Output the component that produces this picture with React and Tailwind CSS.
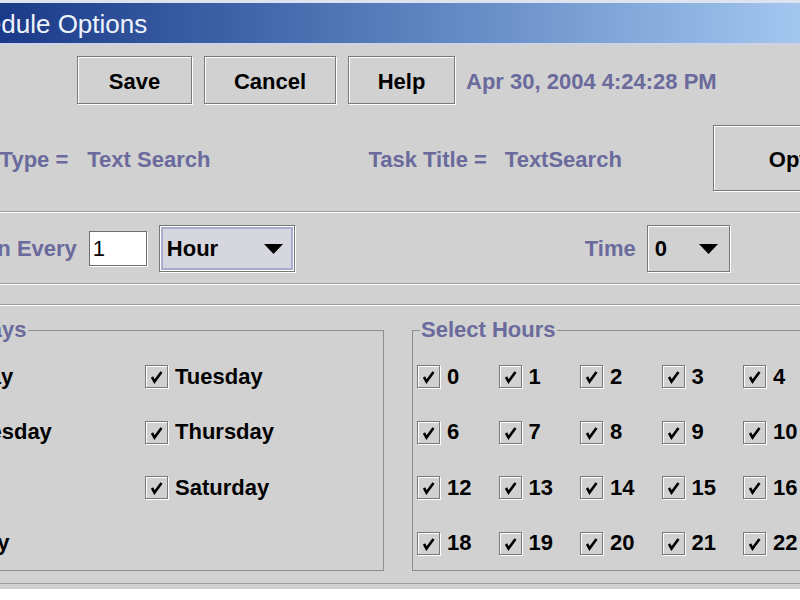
import React from 'react';

const LABEL = "text-[22px] font-bold leading-none text-[#6a6a9c] whitespace-nowrap";
const BLACK = "text-[22px] font-bold leading-none text-black whitespace-nowrap";

function Btn({children, className}) {
  return (
    <div className={"shrink-0 flex items-center justify-center pt-[4px] border border-[#7a7a7a] shadow-[inset_1px_1px_0_#fff,1px_1px_0_#fff] " + BLACK + " " + className}>
      {children}
    </div>
  );
}

function Arrow() {
  return (
    <svg width="19" height="10" viewBox="0 0 19 10" className="shrink-0">
      <polygon points="0,0 19,0 9.5,10" fill="#000" />
    </svg>
  );
}

function Check({label}) {
  return (
    <div className="flex items-center h-full">
      <span className="w-[23px] h-[23px] shrink-0 border border-[#7a7a7a] shadow-[inset_1px_1px_0_#fff,1px_1px_0_#fff] flex items-center justify-center">
        <svg width="15" height="15" viewBox="0 0 15 15">
          <path d="M3 8 L5.5 12.5 L12.5 3" stroke="#000" strokeWidth="2.6" fill="none" />
        </svg>
      </span>
      <span className={"ml-[7px] " + BLACK}>{label}</span>
    </div>
  );
}

export default function App() {
  const days = ["Monday", "Tuesday", "Wednesday", "Thursday", "Friday", "Saturday", "Sunday"];
  const hours = [];
  for (let i = 0; i < 24; i++) hours.push(i);

  return (
    <div className="w-[800px] h-[600px] overflow-hidden bg-white font-['Liberation_Sans',Arial,sans-serif]">
      <div className="h-[589px] bg-[#d1d1d1] flex flex-col">
        {/* title bar */}
        <div className="h-[45px] shrink-0 border-t-[3px] border-b-2 border-t-[#dde3ef] border-b-[#cdd3e4] bg-linear-to-r from-[#1b3a89] to-[#a3c7ef] flex items-center">
          <span className="-ml-[58px] pt-[2px] text-[26px] leading-none text-[#eef3fb] whitespace-nowrap">Schedule Options</span>
        </div>

        {/* buttons */}
        <div className="mt-[11px] h-[48px] flex items-center">
          <Btn className="ml-[77px] w-[115px] h-[48px]">Save</Btn>
          <Btn className="ml-[12px] w-[132px] h-[48px]">Cancel</Btn>
          <Btn className="ml-[12px] w-[107px] h-[48px]">Help</Btn>
          <span className={"ml-[11px] pt-[4px] " + LABEL}>Apr 30, 2004 4:24:28 PM</span>
        </div>

        {/* task info */}
        <div className="mt-[21px] h-[66px] flex items-center">
          <span className={"-ml-[55px] pt-[4px] " + LABEL}>Task Type =</span>
          <span className={"ml-[19px] pt-[4px] " + LABEL}>Text Search</span>
          <span className={"ml-[158px] pt-[4px] " + LABEL}>Task Title =</span>
          <span className={"ml-[18px] pt-[4px] " + LABEL}>TextSearch</span>
          <Btn className="ml-[91px] w-[195px] h-[66px]">Options</Btn>
        </div>

        <div className="mt-[20px] h-[2px] shrink-0 border-t border-b border-t-[#9c9c9c] border-b-white" />

        {/* run every */}
        <div className="mt-[12px] h-[47px] flex items-center">
          <span className={"-ml-[32px] " + LABEL}>Run Every</span>
          <div className="ml-[12px] w-[58px] h-[35px] shrink-0 bg-white border border-[#6e6e6e] shadow-[1px_1px_0_#fff] flex items-center pl-[3px]">
            <span className="text-[22px] leading-none text-black">1</span>
          </div>
          <div className="ml-[12px] w-[136px] h-[47px] shrink-0 border border-[#777] shadow-[1px_1px_0_#fff] p-px">
            <div className="w-full h-full border-2 border-[#a9abcf] shadow-[0_0_0_1px_#fff] bg-[#d6d6de] flex items-center pl-[4px] pr-[8px]">
              <span className={BLACK}>Hour</span>
              <span className="ml-auto"><Arrow /></span>
            </div>
          </div>
          <span className={"ml-[290px] " + LABEL}>Time</span>
          <div className="ml-[11px] w-[83px] h-[47px] shrink-0 border border-[#777] shadow-[inset_1px_1px_0_#fff,1px_1px_0_#fff] flex items-center pl-[7px] pr-[11px]">
            <span className={BLACK}>0</span>
            <span className="ml-auto"><Arrow /></span>
          </div>
        </div>

        <div className="mt-[11px] h-[2px] shrink-0 border-t border-b border-t-[#9c9c9c] border-b-white" />

        {/* day / hour selection */}
        <div className="mt-[19px] h-[280px] shrink-0 border-t border-b border-[#9c9c9c] shadow-[inset_0_1px_0_#fff] flex items-start">
          <fieldset className="mt-[14px] -ml-[106px] w-[490px] min-w-0 h-[252px] shrink-0 border border-[#8e8e8e] px-[5px]">
            <legend className={"ml-[2px] px-px leading-[26px] " + LABEL}>Select Days</legend>
            <div className="pt-[8px] grid grid-cols-[245px_200px] auto-rows-[55.5px]">
              {days.map((d) => <Check key={d} label={d} />)}
            </div>
          </fieldset>

          <fieldset className="mt-[14px] ml-[28px] w-[500px] min-w-0 h-[252px] shrink-0 border border-[#8e8e8e] px-[4px]">
            <legend className={"ml-[3px] px-px leading-[26px] " + LABEL}>Select Hours</legend>
            <div className="pt-[8px] grid grid-cols-[repeat(6,81.5px)] auto-rows-[55.5px]">
              {hours.map((h) => <Check key={h} label={String(h)} />)}
            </div>
          </fieldset>
        </div>
      </div>
    </div>
  );
}
